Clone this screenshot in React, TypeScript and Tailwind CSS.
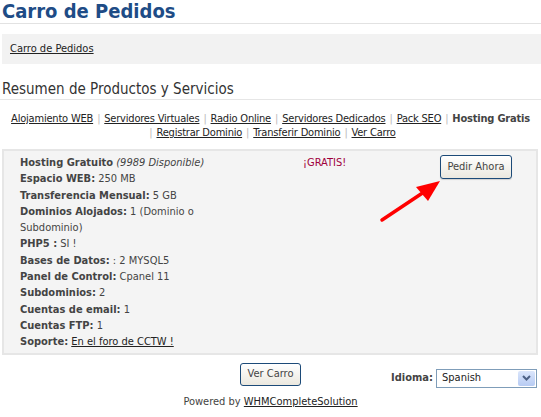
import React from "react";

const features: { label: string; value: React.ReactNode }[] = [
  { label: "Espacio WEB", value: "250 MB" },
  { label: "Transferencia Mensual", value: "5 GB" },
  { label: "Dominios Alojados", value: "1 (Dominio o Subdominio)" },
  { label: "PHP5 ", value: "SI !" },
  { label: "Bases de Datos", value: ": 2 MYSQL5" },
  { label: "Panel de Control", value: "Cpanel 11" },
  { label: "Subdominios", value: "2" },
  { label: "Cuentas de email", value: "1" },
  { label: "Cuentas FTP", value: "1" },
  {
    label: "Soporte",
    value: (
      <a href="#" className="underline text-[#222]">
        En el foro de CCTW !
      </a>
    ),
  },
];

const categories = [
  "Alojamiento WEB",
  "Servidores Virtuales",
  "Radio Online",
  "Servidores Dedicados",
  "Pack SEO",
];

const Sep = () => <span className="text-[#bbb] mx-[4px]">|</span>;

const App: React.FC = () => {
  return (
    <div className="w-[541px] h-[417px] bg-white text-[11px] text-[#444] font-['DejaVu_Sans_Condensed','Liberation_Sans',sans-serif] overflow-hidden">
      <h1 className="pl-[2px] h-[24px] leading-[22px] text-[20px] font-bold text-[#1e4c86] border-b border-[#e2e2e2]">
        Carro de Pedidos
      </h1>

      <div className="mt-[10px] ml-[2px] h-[30px] bg-[#f2f2f2] pl-[8px] flex items-center">
        <a href="#" className="underline text-[#222]">
          Carro de Pedidos
        </a>
      </div>

      <h2 className="mt-[16px] pl-[2px] h-[20px] leading-[18px] text-[15px] text-[#333] border-b border-[#e6e6e6]">
        Resumen de Productos y Servicios
      </h2>

      <div className="mt-[12px] mb-[9px] text-center leading-[14px] text-[#222] tracking-[-0.2px]">
        {categories.map((c) => (
          <React.Fragment key={c}>
            <a href="#" className="underline">
              {c}
            </a>
            <Sep />
          </React.Fragment>
        ))}
        <b className="text-[#444]">Hosting Gratis</b>
        <br />
        <Sep />
        <a href="#" className="underline">
          Registrar Dominio
        </a>
        <Sep />
        <a href="#" className="underline">
          Transferir Dominio
        </a>
        <Sep />
        <a href="#" className="underline">
          Ver Carro
        </a>
      </div>

      <div className="relative ml-[2px] mr-[3px] bg-[#f4f4f4] border-2 border-[#e6e6e6] flex pt-[4px] pb-[2px]">
        <div className="w-[236px] pl-[16px] leading-[16.3px]">
          <div>
            <b>Hosting Gratuito</b> <i>(9989 Disponible)</i>
          </div>
          {features.map((f) => (
            <div key={f.label}>
              <b>{f.label}:</b> {f.value}
            </div>
          ))}
        </div>
        <div className="ml-[63px] w-[137px] leading-[16px] text-[#a0003c]">¡GRATIS!</div>
        <div>
          <button className="h-[24px] w-[72px] rounded-[3px] border border-[#1c4a78] bg-gradient-to-b from-white to-[#ebe8df] text-[#444] text-[11px] shadow-[0_1px_1px_rgba(0,0,0,0.15)]">
            Pedir Ahora
          </button>
        </div>
        <svg
          className="absolute left-[374px] top-[26px] pointer-events-none"
          width="64"
          height="48"
          viewBox="0 0 64 48"
        >
          <line x1="4" y1="43" x2="46" y2="15" stroke="#ff0000" strokeWidth="3.5" strokeLinecap="round" />
          <polygon points="62,4 38,10 50,24" fill="#ff0000" />
        </svg>
      </div>

      <div className="grid grid-cols-[1fr_auto_1fr] mt-[8px]">
        <div />
        <button className="h-[23px] w-[61px] rounded-[3px] border border-[#1c4a78] bg-gradient-to-b from-white to-[#ebe8df] text-[#444] text-[11px]">
          Ver Carro
        </button>
        <div className="flex items-center justify-end pr-[4px] pt-[6px]">
          <b className="mr-[3px]">Idioma:</b>
          <div className="w-[101px] h-[19px] border border-[#7f9db9] bg-white flex items-center pl-[5px] text-[#222]">
            <span className="flex-1">Spanish</span>
            <span className="w-[17px] h-[15px] mr-[1px] rounded-[2px] bg-gradient-to-b from-[#dbe6fb] to-[#b7cbf3] flex items-center justify-center">
              <svg width="9" height="6" viewBox="0 0 9 6">
                <path d="M1 1l3.5 3.5L8 1" fill="none" stroke="#4d6185" strokeWidth="2" />
              </svg>
            </span>
          </div>
        </div>
      </div>

      <div className="mt-[7px] leading-[14px] text-center text-[#444]">
        Powered by{" "}
        <a href="#" className="underline text-[#222]">
          WHMCompleteSolution
        </a>
      </div>
    </div>
  );
};

export default App;
